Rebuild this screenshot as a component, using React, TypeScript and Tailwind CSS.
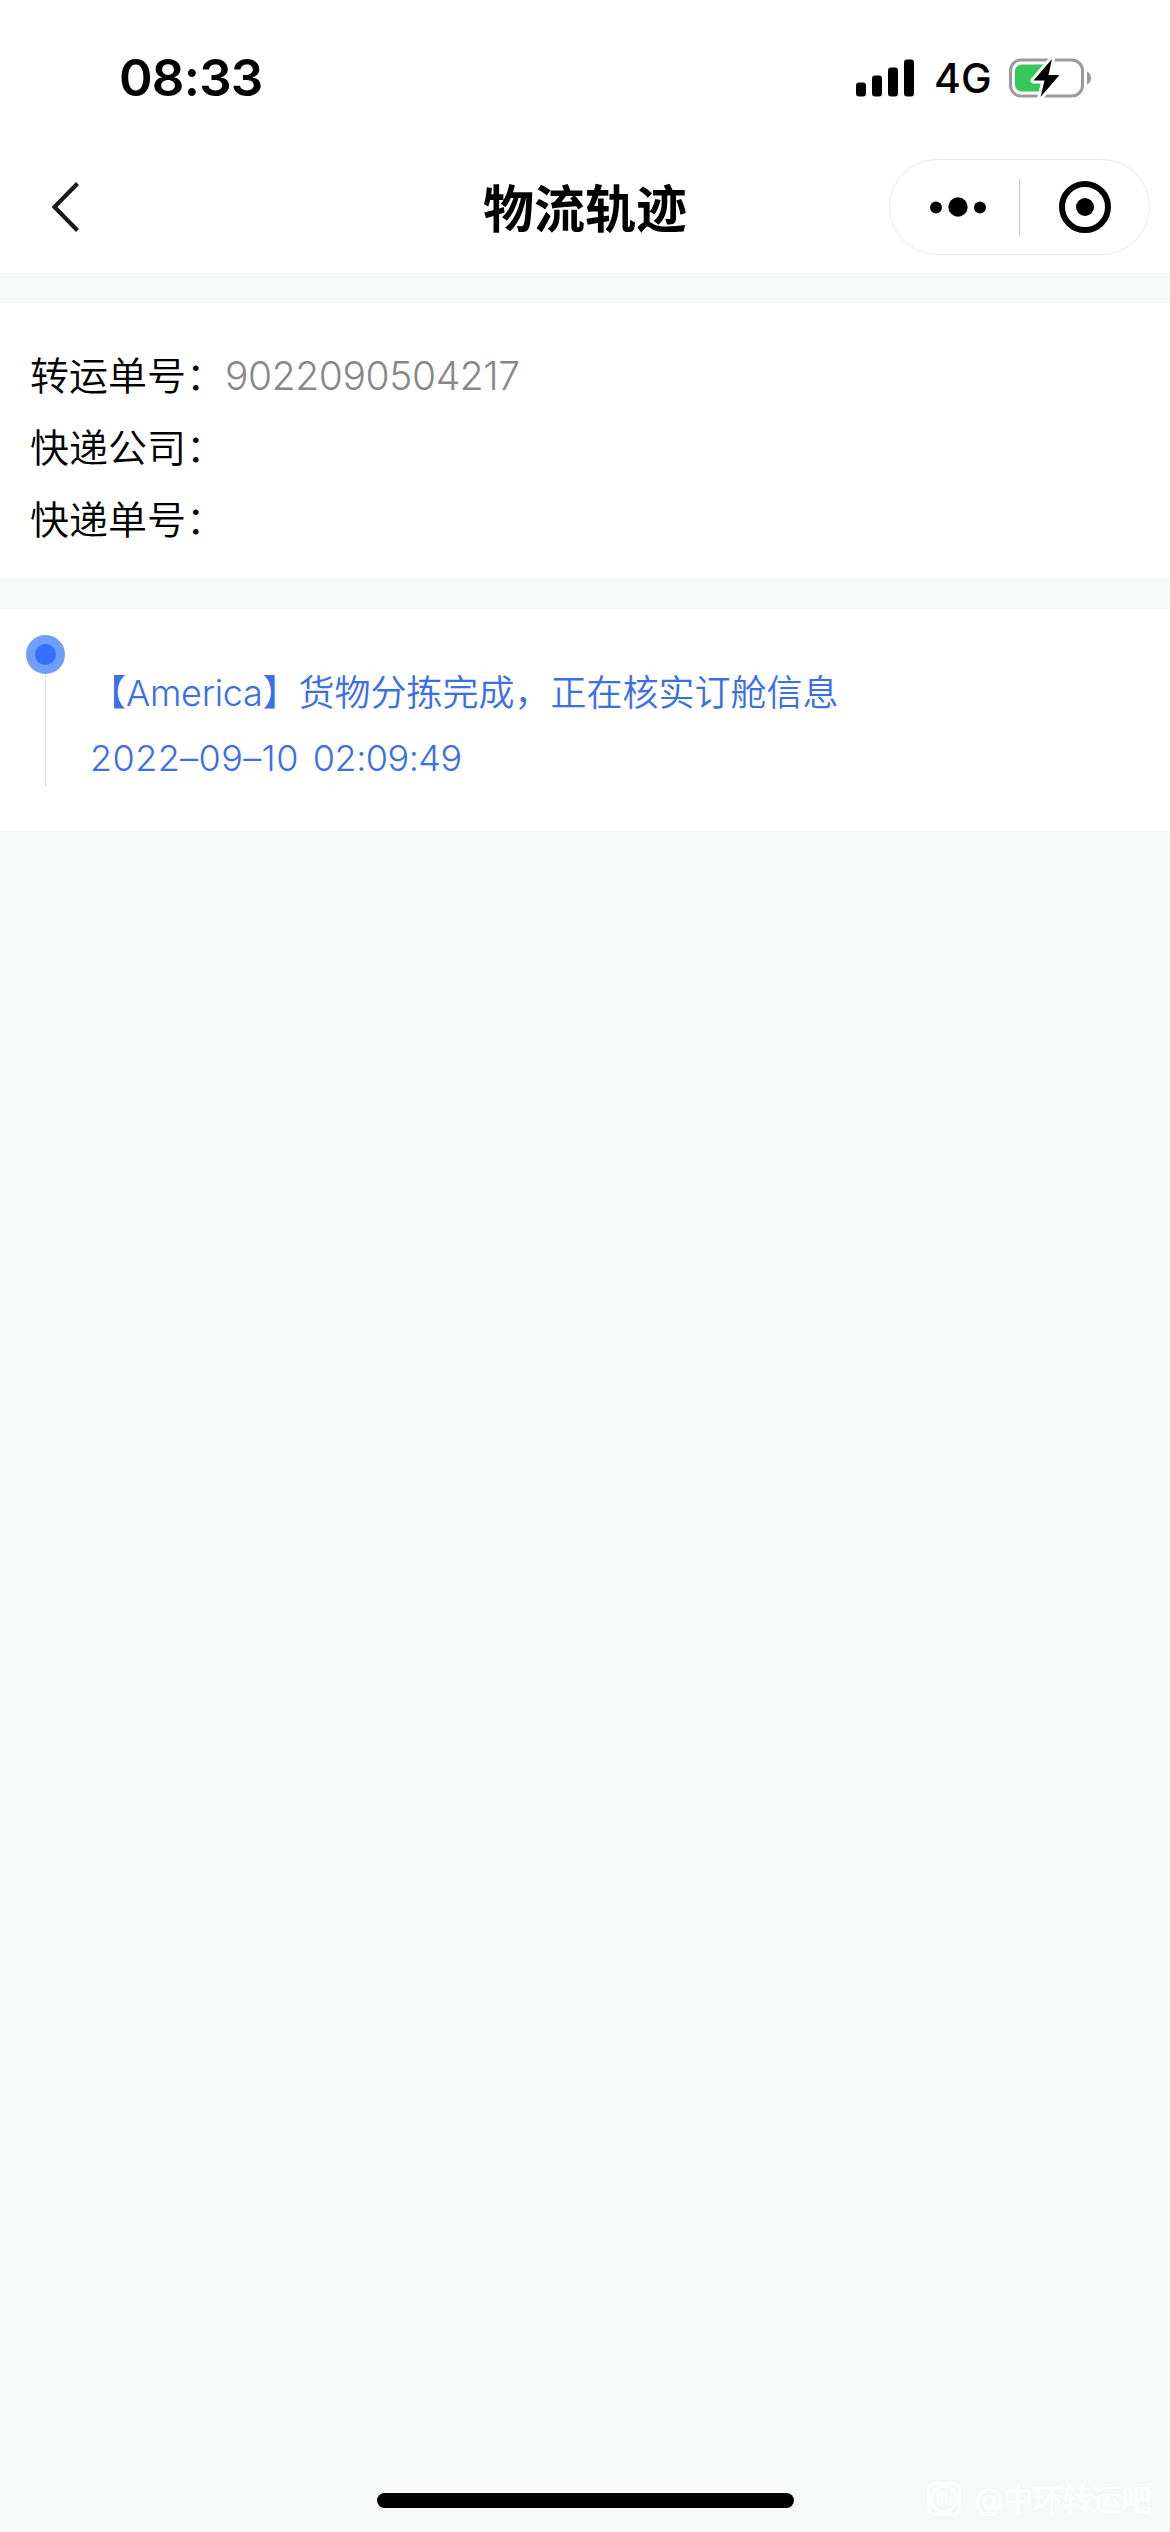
const orderRows = [
  { label: "转运单号\uff1a", value: "9022090504217" },
  { label: "快递公司\uff1a", value: "" },
  { label: "快递单号\uff1a", value: "" },
]

function StatusBar() {
  return (
    <div className="flex h-[156px] items-start justify-between pl-[119px] pr-[78px] pt-[54px] font-['Inter',sans-serif]">
      <span className="text-[51px] font-semibold leading-[48px] tracking-[-0.8px]">08:33</span>
      <div className="flex h-12 items-center">
        <svg width="58" height="38" viewBox="0 0 58 38" fill="#000">
          <rect x="0" y="23.5" width="10" height="14" rx="3" />
          <rect x="16" y="16.5" width="10" height="21" rx="3" />
          <rect x="32" y="8.5" width="10" height="29" rx="3" />
          <rect x="48" y="0.5" width="10" height="37" rx="3" />
        </svg>
        <span className="ml-5 w-[55px] whitespace-nowrap text-[41px] font-[450] leading-[50px]">4G</span>
        <svg className="ml-5" width="83" height="42" viewBox="0 0 83 42">
          <rect x="1.5" y="3" width="72" height="36" rx="10.5" fill="none" stroke="#9b9b9d" strokeWidth="3" />
          <path d="M78 14.5c2.6 1 4 3.500 4 6.500s-1.400 5.500-4 6.500z" fill="#9b9b9d" />
          <rect x="6" y="7.500" width="36" height="27" rx="6.500" fill="#34c759" />
          <path
            d="M43 2 24.500 23.500h11L31.500 40 50.500 18h-11z"
            fill="#000"
            stroke="#fff"
            strokeWidth="6"
            strokeLinejoin="round"
            paintOrder="stroke"
          />
        </svg>
      </div>
    </div>
  )
}

function NavBar() {
  return (
    <div className="grid h-[117px] grid-cols-3 items-start pt-[3px]">
      <svg className="ml-[50px] mt-[22px]" width="32" height="52" viewBox="0 0 32 52" fill="none">
        <path d="M27.500 2.500 4.500 26l23 23.500" stroke="#1a1a1a" strokeWidth="4.200" />
      </svg>
      <h1 className="pt-[15px] text-center text-[51px] font-semibold leading-[72px]">物流轨迹</h1>
      <div className="mr-5 flex h-24 w-[261px] items-center justify-self-end rounded-full border border-[#e8e8e8]">
        <svg className="ml-10" width="56" height="20" viewBox="0 0 56 20">
          <circle cx="6" cy="10.500" r="6" />
          <circle cx="28" cy="10" r="9.700" />
          <circle cx="50" cy="10.500" r="6" />
        </svg>
        <div className="ml-[33px] h-[57px] w-px bg-[#c8c8c8]" />
        <svg className="ml-[39px]" width="52" height="52" viewBox="0 0 52 52">
          <circle cx="26" cy="26" r="23" fill="none" stroke="#000" strokeWidth="6" />
          <circle cx="26" cy="26" r="9" />
        </svg>
      </div>
    </div>
  )
}

function Watermark() {
  return (
    <div className="absolute bottom-[13px] right-[19px] flex items-center gap-[13px] text-white">
      <svg width="34" height="34" viewBox="0 0 34 34" fill="none">
        <rect x="1.500" y="1.500" width="31" height="31" rx="6" stroke="#fff" strokeWidth="2.500" />
        <circle cx="17" cy="17" r="12.500" stroke="#fff" strokeWidth="2" />
        <path d="M9 12h7M11 12v9M15 12v10M19 11v11M19 16h6v6h-6" stroke="#fff" strokeWidth="1.200" />
      </svg>
      <span className="whitespace-nowrap text-[30px] leading-[40px] tracking-[-0.4px]">@中环转运吧</span>
    </div>
  )
}

export default function App() {
  return (
    <div className="relative flex h-[2532px] w-[1170px] flex-col overflow-hidden bg-[#f7f9f9] font-['Inter','Noto_Sans_CJK_SC',sans-serif] text-black">
      <header className="bg-white">
        <StatusBar />
        <NavBar />
      </header>

      <section className="mt-[30px] h-[276px] bg-white px-[30px] pt-[37px]">
        {orderRows.map((row) => (
          <div key={row.label} className="flex h-[72px] items-center text-[39px] font-[350]">
            <span className="w-[195px]">{row.label}</span>
            <span className="tracking-[-0.4px] text-[#888]">{row.value}</span>
          </div>
        ))}
      </section>

      <section className="mt-[30px] flex h-[222px] bg-white pl-[26px] pt-[26px]">
        <div className="flex w-[39px] flex-col items-center">
          <div className="flex size-[39px] items-center justify-center rounded-full bg-[#709ffa]">
            <div className="size-[21px] rounded-full bg-[#3370ff]" />
          </div>
          <div className="h-[113px] w-px bg-[#e4e4e4]" />
        </div>
        <div className="ml-[25px] pt-[25px] text-[36px] font-[350] text-[#3b6fe8]">
          <p className="h-[66px] leading-[66px]">
            【<span className="tracking-[-0.3px]">America</span>】货物分拣完成{"\uff0c"}正在核实订舱信息
          </p>
          <p className="flex h-[66px] gap-3.5 leading-[64px]">
            <span className="tracking-[0.4px]">2022–09–10</span>
            <span className="tracking-[-0.5px]">02:09:49</span>
          </p>
        </div>
      </section>

      <div className="mx-auto mb-6 mt-auto h-[15px] w-[417px] rounded-full bg-black" />
      <Watermark />
    </div>
  )
}
